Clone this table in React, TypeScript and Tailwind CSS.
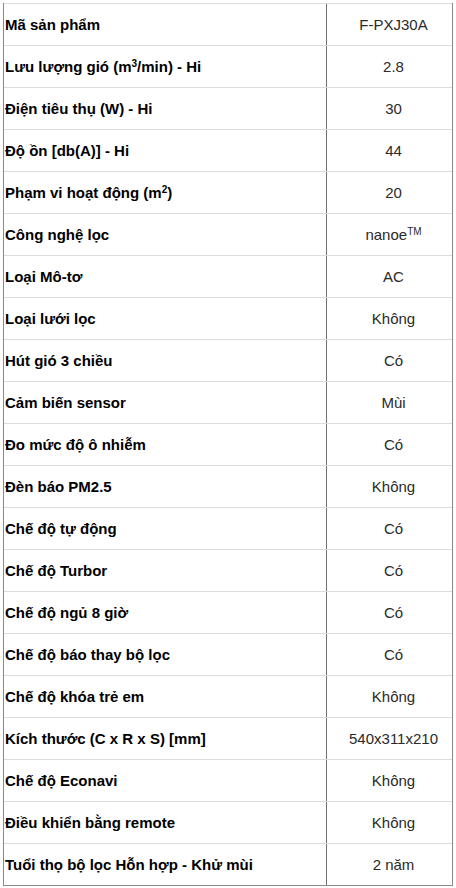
import React from "react";

const rows: [React.ReactNode, React.ReactNode][] = [
  ["Mã sản phẩm", "F-PXJ30A"],
  [<>Lưu lượng gió (m<sup className="text-[10px]">3</sup>/min) - Hi</>, "2.8"],
  ["Điện tiêu thụ (W) - Hi", "30"],
  ["Độ ồn [db(A)] - Hi", "44"],
  [<>Phạm vi hoạt động (m<sup className="text-[10px]">2</sup>)</>, "20"],
  ["Công nghệ lọc", <>nanoe<sup className="text-[10px]">TM</sup></>],
  ["Loại Mô-tơ", "AC"],
  ["Loại lưới lọc", "Không"],
  ["Hút gió 3 chiều", "Có"],
  ["Cảm biến sensor", "Mùi"],
  ["Đo mức độ ô nhiễm", "Có"],
  ["Đèn báo PM2.5", "Không"],
  ["Chế độ tự động", "Có"],
  ["Chế độ Turbor", "Có"],
  ["Chế độ ngủ 8 giờ", "Có"],
  ["Chế độ báo thay bộ lọc", "Có"],
  ["Chế độ khóa trẻ em", "Không"],
  ["Kích thước (C x R x S) [mm]", "540x311x210"],
  ["Chế độ Econavi", "Không"],
  ["Điều khiển bằng remote", "Không"],
  ["Tuổi thọ bộ lọc Hỗn hợp - Khử mùi", "2 năm"],
];

export default function App() {
  return (
    <div className="w-[456px] h-[888px] bg-white pt-[3px] pl-[3px] overflow-hidden" style={{ fontFamily: '"Liberation Sans", Arial, sans-serif' }}>
      <div className="w-[450px] border-l border-r border-l-[#8a8a8a] border-r-[#8a8a8a] border-b border-b-[#8a8a8a]">
        {rows.map(([k, v], i) => (
          <div key={i} className="flex h-[42px] border-t border-[#dcdcdc]">
            <div className="w-[323px] flex items-center pl-[1px] text-[15px] font-bold text-black leading-none border-r border-[#707070]">
              <span>{k}</span>
            </div>
            <div className="flex-1 flex items-center justify-center text-[15px] text-[#2a2a2a] leading-none pl-[8px]">
              <span>{v}</span>
            </div>
          </div>
        ))}
      </div>
    </div>
  );
}
